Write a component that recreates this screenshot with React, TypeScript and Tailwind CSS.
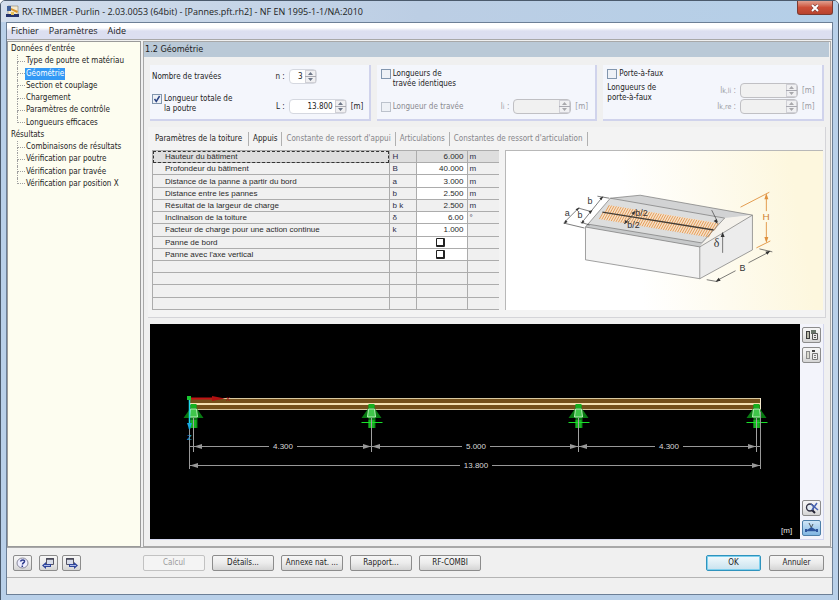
import React from "react";

const inputTree = ["Type de poutre et matériau", "Géométrie", "Section et couplage", "Chargement", "Paramètres de contrôle", "Longueurs efficaces"];
const resultTree = ["Combinaisons de résultats", "Vérification par poutre", "Vérification par travée", "Vérification par position X"];

function TreeRoot({ label }: { label: string }) {
  return <li className="flex flex-1 items-center whitespace-nowrap pl-[3px]">{label}</li>;
}

function TreeItem({ label, last, selected }: { label: string; last: boolean; selected: boolean }) {
  return (
    <li className="flex flex-1 whitespace-nowrap pl-[9px]">
      <span className="flex w-2 flex-col">
        <span className="flex-1 border-b border-l border-dotted border-[#a0a0a0]" />
        <span className={last ? "flex-1" : "flex-1 border-l border-dotted border-[#a0a0a0]"} />
      </span>
      <a href="#" className={selected ? "flex items-center bg-[#3399f5] px-px text-white" : "flex items-center px-px"}>
        {label}
      </a>
    </li>
  );
}

function Tick({ id, label, checked, disabled }: { id: string; label: React.ReactNode; checked?: boolean; disabled?: boolean }) {
  return (
    <div className={disabled ? "flex gap-0.5 text-[#8a8a90]" : "flex gap-0.5"}>
      <span className="grid size-2.5 shrink-0">
        <input
          id={id}
          type="checkbox"
          defaultChecked={checked}
          disabled={disabled}
          className="peer col-start-1 row-start-1 size-2.5 appearance-none border border-[#8296ae] bg-[#eef1f6] disabled:border-[#bcc2cc]"
        />
        <svg viewBox="0 0 10 10" className="pointer-events-none col-start-1 row-start-1 size-2.5 opacity-0 peer-checked:opacity-100">
          <path d="M2.5 5 4.3 7.5 7.6 2" fill="none" stroke="#2b4384" strokeWidth="1.5" />
        </svg>
      </span>
      <label htmlFor={id} className="whitespace-nowrap">{label}</label>
    </div>
  );
}

function Spin({ id, label, value, unit, disabled, narrow }: { id: string; label: React.ReactNode; value?: string; unit?: string; disabled?: boolean; narrow?: boolean }) {
  return (
    <div className={disabled ? "flex items-center text-[#9a9aa2]" : "flex items-center"}>
      <label htmlFor={id} className="w-6 whitespace-nowrap pr-1 text-right">{label}</label>
      <span className={(disabled ? "border-[#c0c0c4] bg-[#f1f1f1] " : "border-[#d5d8e0] bg-white ") + (narrow ? "w-7" : "w-[58px]") + " flex h-[15px] rounded-sm border"}>
        <input id={id} defaultValue={value} disabled={disabled} className="w-0 min-w-0 flex-1 bg-transparent pr-0.5 text-right outline-none" />
        <svg viewBox="0 0 11 13" className="h-[13px] w-[11px]">
          <rect x="0.5" y="0.5" width="10" height="12" fill="#f0f0f2" stroke="#d0d0d6" />
          <path d="M0 6.5h11" stroke="#a8a8b0" />
          <path d="M3 5 5.5 2 8 5zM3 8 5.5 11 8 8z" fill={disabled ? "#a8a8ac" : "#6c7688"} />
        </svg>
      </span>
      <span className="w-5 pl-1">{unit}</span>
    </div>
  );
}

const tabs = ["Paramètres de la toiture", "Appuis", "Constante de ressort d'appui", "Articulations", "Constantes de ressort d'articulation"];

type Row = { name: string; sym?: React.ReactNode; value?: string; unit?: string; tick?: boolean };
const rows: Row[] = [
  { name: "Hauteur du bâtiment", sym: "H", value: "6.000", unit: "m" },
  { name: "Profondeur du bâtiment", sym: "B", value: "40.000", unit: "m" },
  { name: "Distance de la panne à partir du bord", sym: "a", value: "3.000", unit: "m" },
  { name: "Distance entre les pannes", sym: "b", value: "2.500", unit: "m" },
  { name: "Résultat de la largeur de charge", sym: <>b k</>, value: "2.500", unit: "m" },
  { name: "Inclinaison de la toiture", sym: "δ", value: "6.00", unit: "°" },
  { name: "Facteur de charge pour une action continue", sym: "k", value: "1.000" },
  { name: "Panne de bord", tick: true },
  { name: "Panne avec l'axe vertical", tick: true },
  { name: "" }, { name: "" }, { name: "" }, { name: "" },
];

function RoofTable() {
  return (
    <table className="h-[160px] w-[347px] shrink-0 table-fixed border-collapse font-['Liberation_Sans',sans-serif] text-[8px] leading-[9px] text-[#2a2a2a]">
      <colgroup>
        <col />
        <col className="w-[27px]" />
        <col className="w-[51px]" />
        <col className="w-[32px]" />
      </colgroup>
      <tbody>
        {rows.map((r, i) => {
          const white = i > 0 && i !== 4 && r.name !== "";
          return (
            <tr key={i} className={i === 0 ? "h-3 bg-[#dedede]" : "h-3 bg-[#f0f0f0]"}>
              <td className={(i === 0 ? "outline-1 -outline-offset-1 outline-dashed outline-[#333] " : "") + "border border-[#acacac] py-0 pl-3"}>{r.name}</td>
              <td className="border border-[#acacac] px-[3px] py-0 text-[#2b2d4a]">{r.sym}</td>
              <td className={(white ? "bg-white " : "") + "border border-[#acacac] py-0 pr-[3px] text-right"}>
                {r.tick ? (
                  <input
                    type="checkbox"
                    aria-label={r.name}
                    className="mx-auto block size-[9px] appearance-none rounded-[1px] border border-r-2 border-b-2 border-[#222] bg-white"
                  />
                ) : r.value}
              </td>
              <td className="border-y border-l border-[#acacac] py-0 pl-0.5 text-[#2b2d4a]">{r.unit}</td>
            </tr>
          );
        })}
      </tbody>
    </table>
  );
}

function Roof() {
  const hatch: React.ReactNode[] = [];
  for (let i = 0; i <= 46; i++) {
    const x = 104 + i * 2.38;
    const y = 54 + i * 0.4;
    hatch.push(<path key={i} d={`M${x} ${y}l-4 7M${x - 6} ${y + 7}l-4 7`} />);
  }
  return (
    <svg viewBox="0 0 319 159" className="h-full w-full font-['Liberation_Sans',sans-serif]">
      <path d="M80 76 195 96 195 128 80 109z" fill="#f3f3f3" />
      <path d="M195 96 248 64 248 99 195 128z" fill="#ececec" />
      <path d="M105 47 135 44 248 64 218 68z" fill="#d2d3d4" />
      <path d="M105 47 220 67 195 96 80 76z" fill="#dcdddd" />
      <path d="M220 67 248 64 195 96z" fill="#f5f2ec" />
      <path d="M82 73 197 92 195 96 80 76z" fill="#c8cacb" />
      <path d="M104 54 214 72 204 86 94 68z" fill="#f7e1c8" />
      <g stroke="#e0944e" strokeWidth="0.9">{hatch}</g>
      <path d="M97 61 209 79" stroke="#443c34" strokeWidth="1.3" />
      <path d="M80 76 195 96 248 64 248 99 195 128 80 109z M195 96v32 M105 47 80 76 M105 47 135 44 248 64 M105 47 220 67 M82 73 197 92 M220 67 197 92" fill="none" stroke="#777" strokeWidth="0.7" />
      <g fill="none" stroke="#444" strokeWidth="0.7">
        <path d="M73 57 84 60M92 45 104 47M58 72 79 77M75 71 84 74M59 71 73 57M76 72 97 46" />
        <path d="M202 129 213 131M212 130 231 120M244 112 265 101M255 98 268 101" />
        <path d="M218 102V84M207 59 213 71M119 73 131 60" />
      </g>
      <g fill="#333">
        <path d="M58 73l2-4 2 2zM74 56l-4 2 2 2zM98 45l-4 2 2 2zM76 73l1-4 2 2zM87 59l-4 1 2 3zM211 131l3-4 2 3zM266 100l-5 1 2 3zM218 81l-2 5h4zM213 73l-4-3 3-2zM130 60l-1 4-3-2zM119 73l1-4 3 2z" />
      </g>
      <g stroke="#df913e" fill="#df913e" strokeWidth="0.9">
        <path d="M236 56 265 41M252 97 266 90M262 44V60M262 71V90" fill="none" />
        <path d="M262 42l-2 6h4zM262 92l-2-6h4z" stroke="none" />
      </g>
      <g fontSize="9" fill="#333">
        <text x="59" y="65">a</text>
        <text x="72" y="67">b</text>
        <text x="82" y="53">b</text>
        <text x="130" y="65">b/2</text>
        <text x="122" y="77">b/2</text>
        <text x="209" y="96" fontSize="12" fontFamily="Liberation Serif">δ</text>
        <text x="235" y="120">B</text>
        <text x="258" y="69" fontSize="10" fill="#cf8030">H</text>
      </g>
    </svg>
  );
}

function Support({ x, bar }: { x: number; bar: boolean }) {
  return (
    <g>
      <path d={`M${x - 10} 94 ${x - 3} 84v-3h6v3l7 10h-6v10h-7V94z`} fill="#087a12" />
      <path d={`M${x - 3} 96h6v8h-6zM${x - 3} 80h6v4h-6z`} fill="#16b020" />
      <path d={`M${x - 3} 85h6l1 8h-8z`} fill="#3fc64a" stroke="#b8f0b8" />
      {bar && <path d={`M${x - 10} 98.500h21`} stroke="#19e02a" />}
      <path d={`M${x} 94v34`} stroke="#a0a0a0" />
    </g>
  );
}

function BeamView() {
  const posts = [43.5, 221.5, 428.5, 606.5];
  return (
    <svg viewBox="0 0 650 215" className="w-full font-['Liberation_Sans',sans-serif]" fontSize="8" fill="#d8d8d8">
      <path d="M39 74h572v12H39z" fill="#74501a" />
      <path d="M39 74.500h572M39 85.500h572" stroke="#d8c8a0" />
      <path d="M39 80h572" stroke="#f4e0b0" strokeWidth="2" />
      <path d="M610.500 74v12" stroke="#f4e8cc" />
      {posts.map((x, i) => <Support key={x} x={x} bar={i > 0} />)}
      <g stroke="#989898">
        <path d="M39.500 98v47M610.500 88v57" />
        <path d="M39 122.500h80M147 122.500h165M340 122.500h165M533 122.500h78M39 141.500h271M342 141.500h269" />
      </g>
      <g fill="#989898">
        {[44, 222, 429, 40].map((x, i) => <path key={i} d={`M${x} ${i < 3 ? 122.5 : 141.5}l8-2.500v5z`} />)}
        {[221, 428, 606, 610].map((x, i) => <path key={i} d={`M${x} ${i < 3 ? 122.5 : 141.5}l-8-2.500v5z`} />)}
      </g>
      <text x="133" y="125" textAnchor="middle">4.300</text>
      <text x="326" y="125" textAnchor="middle">5.000</text>
      <text x="519" y="125" textAnchor="middle">4.300</text>
      <text x="326" y="144" textAnchor="middle">13.800</text>
      <path d="M40 74.500h24" stroke="#c01414" strokeWidth="2" />
      <path d="M62 72 75 74.500 62 77z" fill="#b01010" />
      <text x="76" y="77" fill="#a01414">x</text>
      <path d="M39.500 75v30" stroke="#20d8e8" strokeWidth="1.500" />
      <path d="M37 99h5l-2.500 7z" fill="#18a8e0" />
      <path d="M37 72h4v4h-4z" fill="#18c830" />
      <text x="37" y="116" fill="#28a8e0">Z</text>
      <text x="631" y="209" fill="#e8e8e8">[m]</text>
    </svg>
  );
}

const face = "flex items-center justify-center rounded-[2px] border border-[#8c8c8c] bg-linear-to-b from-[#f6f6f6] via-[#ececec] to-[#d4d4d4]";

function IconButton({ label, active, children }: { label: string; active?: boolean; children: React.ReactNode }) {
  return (
    <button
      aria-label={label}
      className={active
        ? "flex h-4 w-[19px] items-center justify-center rounded-[2px] border border-[#4d7fa8] bg-linear-to-b from-[#cfe6f7] to-[#7fb6e2]"
        : face + " h-4 w-[19px]"}
    >
      <svg viewBox="0 0 15 12" className="h-3 w-[15px]">{children}</svg>
    </button>
  );
}

function PushButton({ children, disabled, primary, short }: { children: React.ReactNode; disabled?: boolean; primary?: boolean; short?: boolean }) {
  return (
    <button
      disabled={disabled}
      className={
        disabled
          ? "h-4 w-[62px] whitespace-nowrap rounded-[2px] border border-[#c2c2c2] bg-[#f4f4f4] text-[#9a9a9a]"
          : primary
            ? "h-4 w-[55px] whitespace-nowrap rounded-[2px] border border-[#2f93bd] bg-linear-to-b from-[#f2fafd] to-[#c8e2ee] ring-1 ring-[#7fd0ee] ring-inset"
            : face + (short ? " w-[55px]" : " w-[62px]") + " h-4 whitespace-nowrap"
      }
    >
      {children}
    </button>
  );
}

export default function App() {
  const group = "border-r-2 border-b-2 border-[#d0d3ec] bg-[#f4f6fc] text-[8px] leading-[10px]";
  return (
    <div className="flex min-h-screen flex-col rounded-t-[5px] border border-[#4b5a6c] bg-[#b9d0e9] px-[5px] pb-[5px] font-['DejaVu_Sans_Condensed','DejaVu_Sans',sans-serif] text-[8px] leading-[10px] text-[#1c1c1c]">
      <header className="-mx-[5px] flex h-[21px] items-start justify-between rounded-t-[4px] bg-linear-to-r from-[#d3deec] via-[#bccee4] to-[#b4cfe8] pl-[5px]">
        <div className="flex h-full items-center gap-[3px]">
          <svg viewBox="0 0 13 13" className="size-[13px]">
            <path d="M2 1h10v10H2z" fill="#f4ead0" stroke="#8a8270" strokeWidth="0.600" />
            <path d="M1 1h4v5H1z" fill="#3d5f9a" />
            <path d="M5 3 12 6 11 8 5 5z" fill="#d9952c" />
            <path d="M0 9h13v3H0z" fill="#24336e" />
            <path d="M5 7h3v3H5z" fill="#e6c25a" />
          </svg>
          <h1 className="whitespace-nowrap font-['Open_Sans',sans-serif] text-[9px] leading-3">RX-TIMBER - Purlin - 2.03.0053 (64bit) - [Pannes.pft.rh2] - NF EN 1995-1-1/NA:2010</h1>
        </div>
        <button aria-label="Fermer" className="mr-[5px] flex h-3.5 w-9 items-center justify-center rounded-b-[3px] border border-t-0 border-[#7c3a30] bg-linear-to-b from-[#e0a090] via-[#cc4f38] to-[#b8432e]">
          <svg viewBox="0 0 10 8" className="h-2 w-2.5">
            <path d="M2 1 8 7M8 1 2 7" stroke="#6b3434" strokeWidth="3" />
            <path d="M2 1 8 7M8 1 2 7" stroke="#fff" strokeWidth="2" />
          </svg>
        </button>
      </header>

      <div className="flex flex-1 flex-col border border-[#6c7f96] bg-[#f0f0f0]">
        <nav className="flex h-4 items-center gap-2.5 bg-linear-to-b from-white from-30% to-[#dcdff0] to-50% pl-1 font-['Open_Sans',sans-serif] text-[9px] leading-3">
          <button>Fichier</button>
          <button>Paramètres</button>
          <button>Aide</button>
        </nav>

        <main className="flex flex-1 gap-0.5 border-y border-[#a8a8a8] pt-px">
          <aside className="w-[134px] shrink-0 border border-[#9a9a9a] bg-[#fdfdf0] pt-px">
            <ul className="flex h-[147px] flex-col">
              <TreeRoot label="Données d'entrée" />
              {inputTree.map((t, i) => <TreeItem key={t} label={t} last={i === inputTree.length - 1} selected={i === 1} />)}
              <TreeRoot label="Résultats" />
              {resultTree.map((t, i) => <TreeItem key={t} label={t} last={i === resultTree.length - 1} selected={false} />)}
            </ul>
          </aside>

          <section className="mr-px flex min-w-0 flex-1 flex-col border border-[#a8a8a8] bg-[#f0f0f0]">
            <h2 className="mr-px h-[15px] bg-[#bac9d7] pl-px text-[9px] leading-[15px]">1.2 Géométrie</h2>
            <div className="grid grid-cols-3 gap-1.5 px-1.5 pt-2">
              <div className={group + " flex flex-col justify-between pt-1 pb-[5px] pl-0.5"}>
                <div className="flex items-center justify-between pr-0.5">
                  <span>Nombre de travées</span>
                  <div className="w-[102px]"><Spin id="n" label="n :" value="3" narrow /></div>
                </div>
                <div className="flex items-end justify-between pr-0.5">
                  <Tick id="total" checked label={<>Longueur totale de<br />la poutre</>} />
                  <div className="w-[102px]"><Spin id="L" label="L :" value="13.800" unit="[m]" /></div>
                </div>
              </div>
              <div className={group + " flex h-14 flex-col justify-between pt-1 pb-[5px] pl-1"}>
                <Tick id="same" label={<>Longueurs de<br />travée identiques</>} />
                <div className="flex items-center justify-between pr-1">
                  <Tick id="span" disabled label="Longueur de travée" />
                  <div className="w-[102px]"><Spin id="li" disabled label={<>l<small className="text-[7px]">i</small> :</>} unit="[m]" /></div>
                </div>
              </div>
              <div className={group + " flex flex-col justify-between pt-1 pb-[5px] pl-1"}>
                <Tick id="cantilever" label="Porte-à-faux" />
                <div className="flex items-start justify-between pr-1">
                  <span>Longueurs de<br />porte-à-faux</span>
                  <div className="flex w-[102px] flex-col gap-px">
                    <Spin id="lkli" disabled label={<>l<small className="text-[7px]">k,li</small> :</>} unit="[m]" />
                    <Spin id="lkre" disabled label={<>l<small className="text-[7px]">k,re</small> :</>} unit="[m]" />
                  </div>
                </div>
              </div>
            </div>

            <div className="mx-1 mt-1.5 border-r border-b border-[#d4d4d8] bg-[#f3f3f3] pr-0.5 pb-[7px] pl-1">
              <div role="tablist" className="flex h-[23px] items-center">
                {tabs.map((t, i) => (
                  <button key={t} role="tab" className={(i > 1 ? "text-[#85858a] " : "") + (i > 0 ? "px-1 " : "pr-1.5 pl-[3px] ") + "h-3.5 whitespace-nowrap border-r border-[#b0b0b0]"}>
                    {t}
                  </button>
                ))}
              </div>
              <div className="flex gap-1.5">
                <RoofTable />
                <div className="h-[160px] min-w-0 flex-1 border-t border-l border-[#b8b8b8] bg-linear-[80deg] from-white from-40% to-[#fdf7de] to-90%">
                  <Roof />
                </div>
              </div>
            </div>

            <div className="mx-1.5 mt-1.5 mb-1.5 flex flex-1 border-r border-b border-[#d4d7ee] bg-[#f3f4fb]">
              <div className="min-w-0 flex-1 bg-black">
                <BeamView />
              </div>
              <div className="flex w-[23px] flex-col items-center gap-1 pt-[3px] pb-[3px]">
                <IconButton label="Coller">
                  <path d="M2 2h4v8H2z" fill="#3c3c3c" /><path d="M3 3h2v6H3z" fill="#b8b8a8" /><path d="M7 1h5v4H7z" fill="#68756a" /><path d="M8.500 4.500h5v6h-5zM10 6.500h2M10 8.500h2" fill="#e8e8e8" stroke="#555" />
                </IconButton>
                <IconButton label="Copier">
                  <path d="M2 2h4v8H2z" fill="#8c8c8c" /><path d="M3 3h2v6H3z" fill="#dadad0" /><path d="M8 1h3v2H8z" fill="#444" /><path d="M8.500 4.500h5v6h-5zM10 6.500h2M10 8.500h2" fill="#eee" stroke="#777" />
                </IconButton>
                <span className="flex-1" />
                <IconButton label="Zoom global">
                  <circle cx="6" cy="5.500" r="3.500" fill="#e4ecf4" stroke="#334" strokeWidth="1.300" /><path d="M8 8l3 3" stroke="#223" strokeWidth="2" /><path d="M7 2 14 8M13 1 8 8" stroke="#4763b4" strokeWidth="1.500" />
                </IconButton>
                <IconButton label="Axes" active>
                  <path d="M7.500 6 5 1M7.500 5 9 2" stroke="#333" fill="none" strokeWidth="0.800" /><path d="M3 8 7.500 5 12 8z" fill="#2d559c" /><path d="M2 8.500h11" stroke="#2d559c" strokeWidth="1.500" /><path d="M1 7h2v3H1zM12 7h2v3h-2z" fill="#2d559c" />
                </IconButton>
              </div>
            </div>
          </section>
        </main>

        <footer>
          <div className="flex h-[30px] items-center border-b border-[#b4b4b4] pr-2 pl-1.5">
            <div className="flex w-[130px] gap-1">
              <span className="mr-[3px]">
                <IconButton label="Aide">
                  <ellipse cx="7.500" cy="6" rx="5.500" ry="5" fill="#eef" stroke="#889" /><path d="M5.500 4.500C6 2.500 10 2.500 9.500 4.500 9 6 7.500 6 7.500 7.500M7.300 8.500v1.500" fill="none" stroke="#2c3a8c" strokeWidth="1.500" />
                </IconButton>
              </span>
              <IconButton label="Précédent">
                <path d="M5.500 1.500h7v6h-7z" fill="#d8dce8" stroke="#556" /><path d="M5 2h8" stroke="#445" strokeWidth="1.500" /><path d="M1 8.500 5 5v2h5v3H5v2z" fill="#2f459c" /><path d="M3 8.500h6" stroke="#a8b8e8" />
              </IconButton>
              <IconButton label="Suivant">
                <path d="M2.500 1.500h7v6h-7z" fill="#d8dce8" stroke="#556" /><path d="M2 2h8" stroke="#445" strokeWidth="1.500" /><path d="M14 8.500 10 5v2H5v3h5v2z" fill="#2f459c" /><path d="M6 8.500h6" stroke="#a8b8e8" />
              </IconButton>
            </div>
            <div className="flex flex-1 gap-[7px]">
              <PushButton disabled>Calcul</PushButton>
              <PushButton>Détails...</PushButton>
              <PushButton>Annexe nat. ...</PushButton>
              <PushButton>Rapport...</PushButton>
              <PushButton>RF-COMBI</PushButton>
            </div>
            <div className="flex gap-2">
              <PushButton primary>OK</PushButton>
              <PushButton short>Annuler</PushButton>
            </div>
          </div>
          <div role="status" className="h-4" />
        </footer>
      </div>
    </div>
  );
}
